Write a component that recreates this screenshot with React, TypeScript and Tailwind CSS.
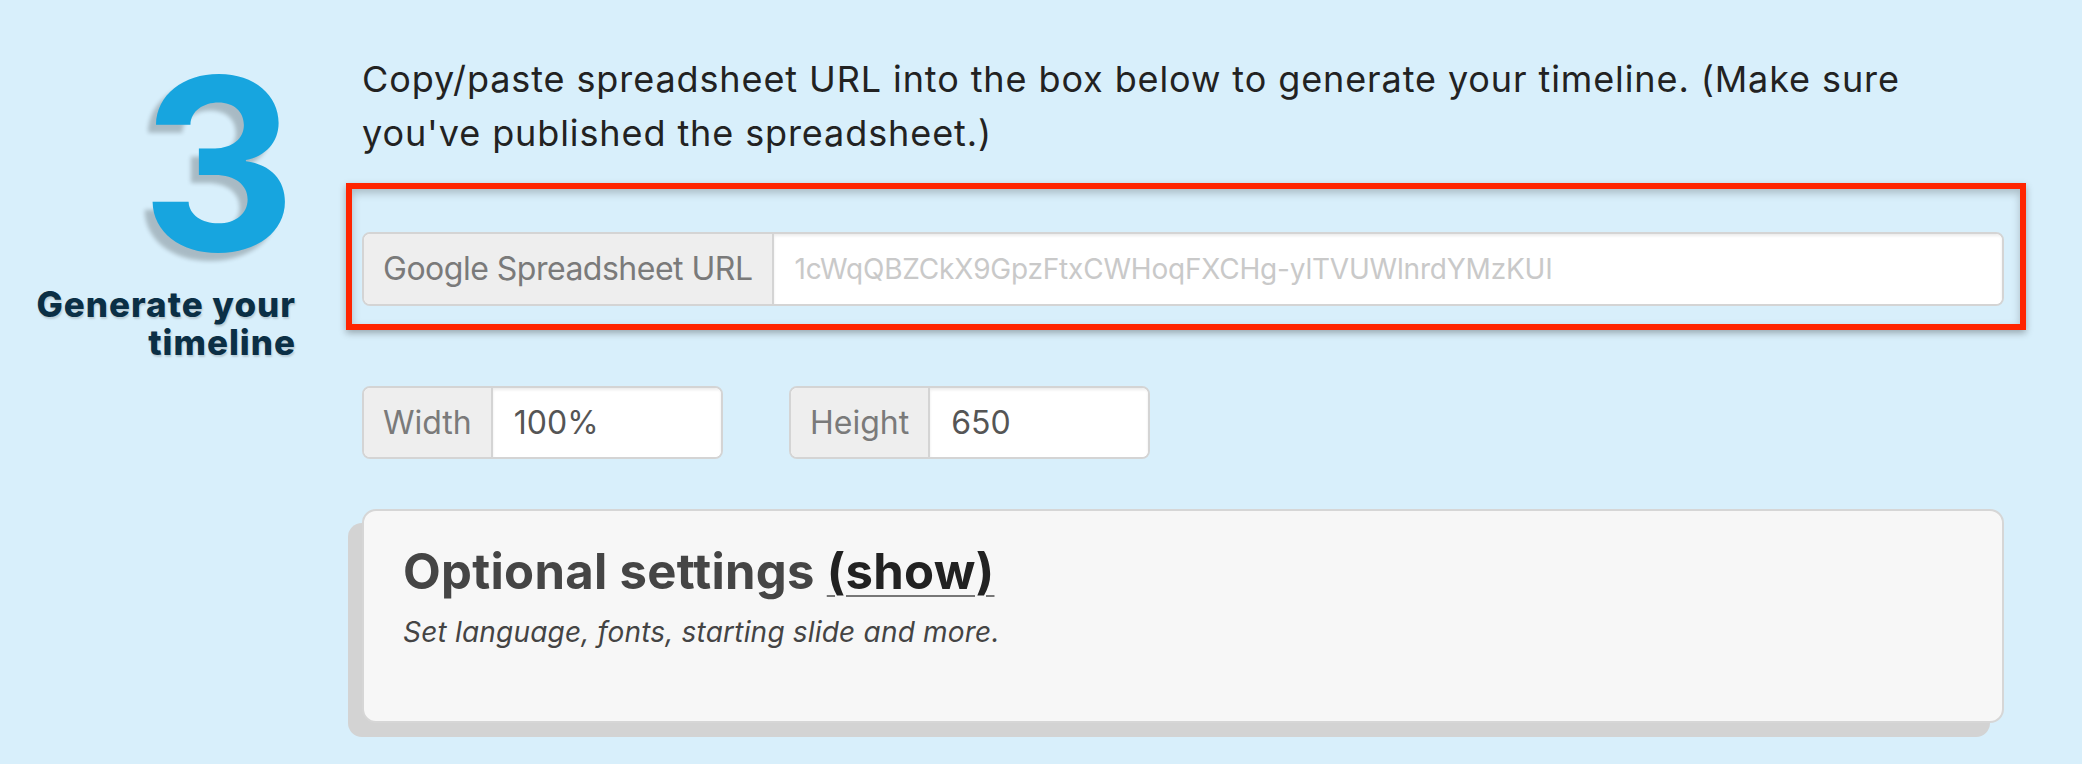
import React from "react";

const SHEET_ID = "1cWqQBZCkX9GpzFtxCWHoqFXCHg-ylTVUWlnrdYMzKUI";

function InputGroup({
  label,
  value,
  placeholder,
  className,
  labelClassName,
  inputClassName = "text-[32px]",
}: {
  label: string;
  value?: string;
  placeholder?: string;
  className?: string;
  labelClassName?: string;
  inputClassName?: string;
}) {
  return (
    <div className={`flex rounded-[8px] border-2 border-[#d4d4d4] overflow-hidden bg-white ${className ?? ""}`}>
      <span
        className={`flex items-center px-[19px] bg-[#eeeeee] text-[#7a7a7a] text-[32px] border-r-2 border-[#d4d4d4] whitespace-nowrap ${labelClassName ?? ""}`}
      >
        {label}
      </span>
      <input
        className={`flex-1 min-w-0 px-[21px] text-[#555555] placeholder:text-[#c9c9c9] bg-white outline-none shadow-[inset_0_2px_3px_rgba(0,0,0,0.08)] ${inputClassName}`}
        defaultValue={value}
        placeholder={placeholder}
      />
    </div>
  );
}

export default function App() {
  return (
    <div className="min-h-[764px] w-full bg-[#d8effb] font-['Inter',sans-serif] text-[#222222]">
      <div className="flex gap-[66px]">
        {/* Step number */}
        <div className="w-[296px] shrink-0 text-right">
          <div className="mt-[69px] text-[240px] leading-[190px] font-bold text-[#17a5df] [text-shadow:-8px_8px_4px_rgba(0,0,0,0.22)]">
            3
          </div>
          <h2 className="mt-[26px] text-[35px] leading-[38px] tracking-[1px] font-extrabold text-[#0b2f45] [text-shadow:1px_2px_2px_rgba(0,0,0,0.15)]">
            Generate your
            <br />
            timeline
          </h2>
        </div>

        {/* Form */}
        <div className="w-[1642px] pt-[52px]">
          <p className="max-w-[1600px] text-[36px] leading-[54px] tracking-[0.9px] text-[#222222]">
            Copy/paste spreadsheet URL into the box below to generate your timeline. (Make sure you've published the spreadsheet.)
          </p>

          <div className="mt-[23px] -ml-[16px] -mr-[22px] border-[6px] border-[#ff2400] pt-[43px] pb-[18px] pl-[10px] pr-[16px] shadow-[0_3px_7px_rgba(0,0,0,0.3),inset_0_4px_8px_rgba(0,0,0,0.22)]">
            <InputGroup
              className="h-[74px]"
              label="Google Spreadsheet URL"
              labelClassName="tracking-[-0.5px]"
              inputClassName="text-[28px] tracking-[-0.2px]"
              placeholder={SHEET_ID}
            />
          </div>

          <div className="mt-[56px] flex gap-[66px]">
            <InputGroup className="h-[73px] w-[361px]" label="Width" value="100%" />
            <InputGroup className="h-[73px] w-[361px]" label="Height" value="650" />
          </div>

          <div className="mt-[50px] h-[214px] rounded-[14px] border-2 border-[#d6d6d6] bg-[#f7f7f7] pl-[39px] pt-[33px] shadow-[-14px_14px_0_#d3d3d3]">
            <h3 className="text-[49px] leading-[56px] tracking-[0.3px] font-bold text-[#454545]">
              Optional settings{" "}
              <a href="#" className="text-[#222222] underline decoration-[#777777] decoration-2 underline-offset-[6px]">
                (show)
              </a>
            </h3>
            <p className="mt-[14px] text-[28px] leading-[36px] tracking-[0.2px] italic text-[#444444]">
              Set language, fonts, starting slide and more.
            </p>
          </div>
        </div>
      </div>
    </div>
  );
}
